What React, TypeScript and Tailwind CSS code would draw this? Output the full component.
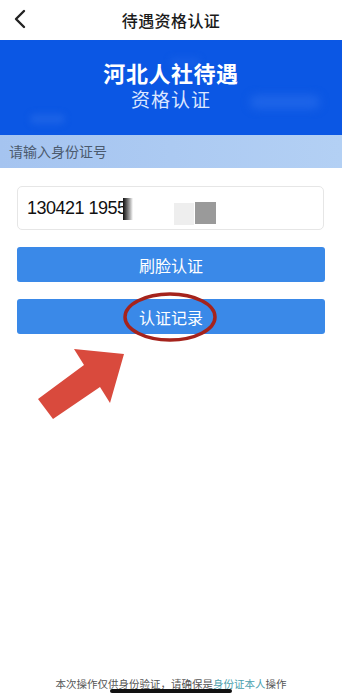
import React from 'react';

const font = { fontFamily: '"Noto Sans CJK SC", "Noto Sans", sans-serif' };

function BackIcon() {
  return (
    <svg width="14" height="20" viewBox="0 0 14 20" fill="none">
      <path d="M11 2 L3 10 L11 18" stroke="#222" strokeWidth="2.4" strokeLinecap="round" strokeLinejoin="round" />
    </svg>
  );
}

export default function App() {
  return (
    <div className="relative w-[342px] h-[700px] bg-white overflow-hidden flex flex-col" style={font}>
      {/* Top bar */}
      <header className="h-10 flex items-center justify-center relative shrink-0">
        <span className="absolute left-[13px] top-[9px]"><BackIcon /></span>
        <h1 className="text-[16px] font-medium text-[#1a1a1a] tracking-wide">待遇资格认证</h1>
      </header>

      {/* Banner */}
      <div className="relative h-[95px] bg-[#0b57e4] flex flex-col items-center justify-center gap-[6px] pb-[6px] shrink-0 overflow-hidden">
        <div className="absolute left-[30px] top-[74px] w-[35px] h-[10px] rounded-full bg-[#1b62e6] blur-[3px]" />
        <div className="absolute left-[250px] top-[55px] w-[70px] h-[14px] rounded-full bg-[#1d64e8] blur-[4px]" />
        <div className="absolute left-[170px] top-[18px] w-[30px] h-[8px] rounded-full bg-[#155ee6] blur-[3px]" />
        <p className="relative text-white text-[22px] font-bold leading-[22px] tracking-wide">河北人社待遇</p>
        <p className="relative text-[#dbe6ff] text-[19px] leading-[20px] tracking-wider">资格认证</p>
      </div>

      {/* Hint strip */}
      <div className="h-[33px] bg-gradient-to-r from-[#a5c4f0] to-[#b3d0f4] flex items-center px-[9px] shrink-0">
        <span className="text-[14px] text-[#4b5a6e]">请输入身份证号</span>
      </div>

      {/* Form */}
      <div className="px-[17px] pt-[18px] flex flex-col gap-[17px]">
        <div className="relative h-[44px] w-[307px] border border-[#e6e6e6] rounded-[5px] flex items-center pl-[9px]">
          <span className="text-[18px] text-[#111] tracking-[-0.5px]" style={{ fontFamily: '"Liberation Sans", Arial, sans-serif' }}>
            130421 1955
          </span>
          <span className="absolute left-[105px] top-[11px] w-[10px] h-[22px] bg-gradient-to-r from-[#111] to-white" />
          <span className="absolute left-[156px] top-[16px] w-[20px] h-[22px] bg-[#eeeeee]" />
          <span className="absolute left-[177px] top-[15px] w-[21px] h-[22px] bg-[#9a9a9a]" />
        </div>

        <button className="h-[35px] w-[308px] rounded-[3px] bg-[#3a89e8] text-white text-[16px] flex items-center justify-center">
          刷脸认证
        </button>

        <div className="relative">
          <button className="h-[35px] w-[308px] rounded-[3px] bg-[#3a89e8] text-white text-[16px] flex items-center justify-center">
            认证记录
          </button>
          {/* red circle annotation */}
          <svg className="absolute left-[105px] top-[-7px]" width="96" height="52" viewBox="0 0 96 52">
            <ellipse cx="48" cy="25" rx="45" ry="23" fill="none" stroke="#a5231c" strokeWidth="3.5" />
          </svg>
        </div>
      </div>

      {/* red arrow annotation */}
      <svg className="absolute left-0 top-0 pointer-events-none" width="342" height="700" viewBox="0 0 342 700">
        <polygon points="38,399 84,365 74,349 124,354 110,403 100,387 53,419" fill="#d94a3d" />
      </svg>

      <div className="flex-1" />

      {/* Footer */}
      <div className="relative h-[30px] flex justify-center shrink-0">
        <p className="text-[10.5px] text-[#555] mt-[6px] whitespace-nowrap">
          本次操作仅供身份验证，请确保是<span className="text-[#4b9fae]">身份证本人</span>操作
        </p>
        <div className="absolute left-[110px] top-[19px] w-[122px] h-[4px] rounded-full bg-[#111]" />
      </div>
    </div>
  );
}
